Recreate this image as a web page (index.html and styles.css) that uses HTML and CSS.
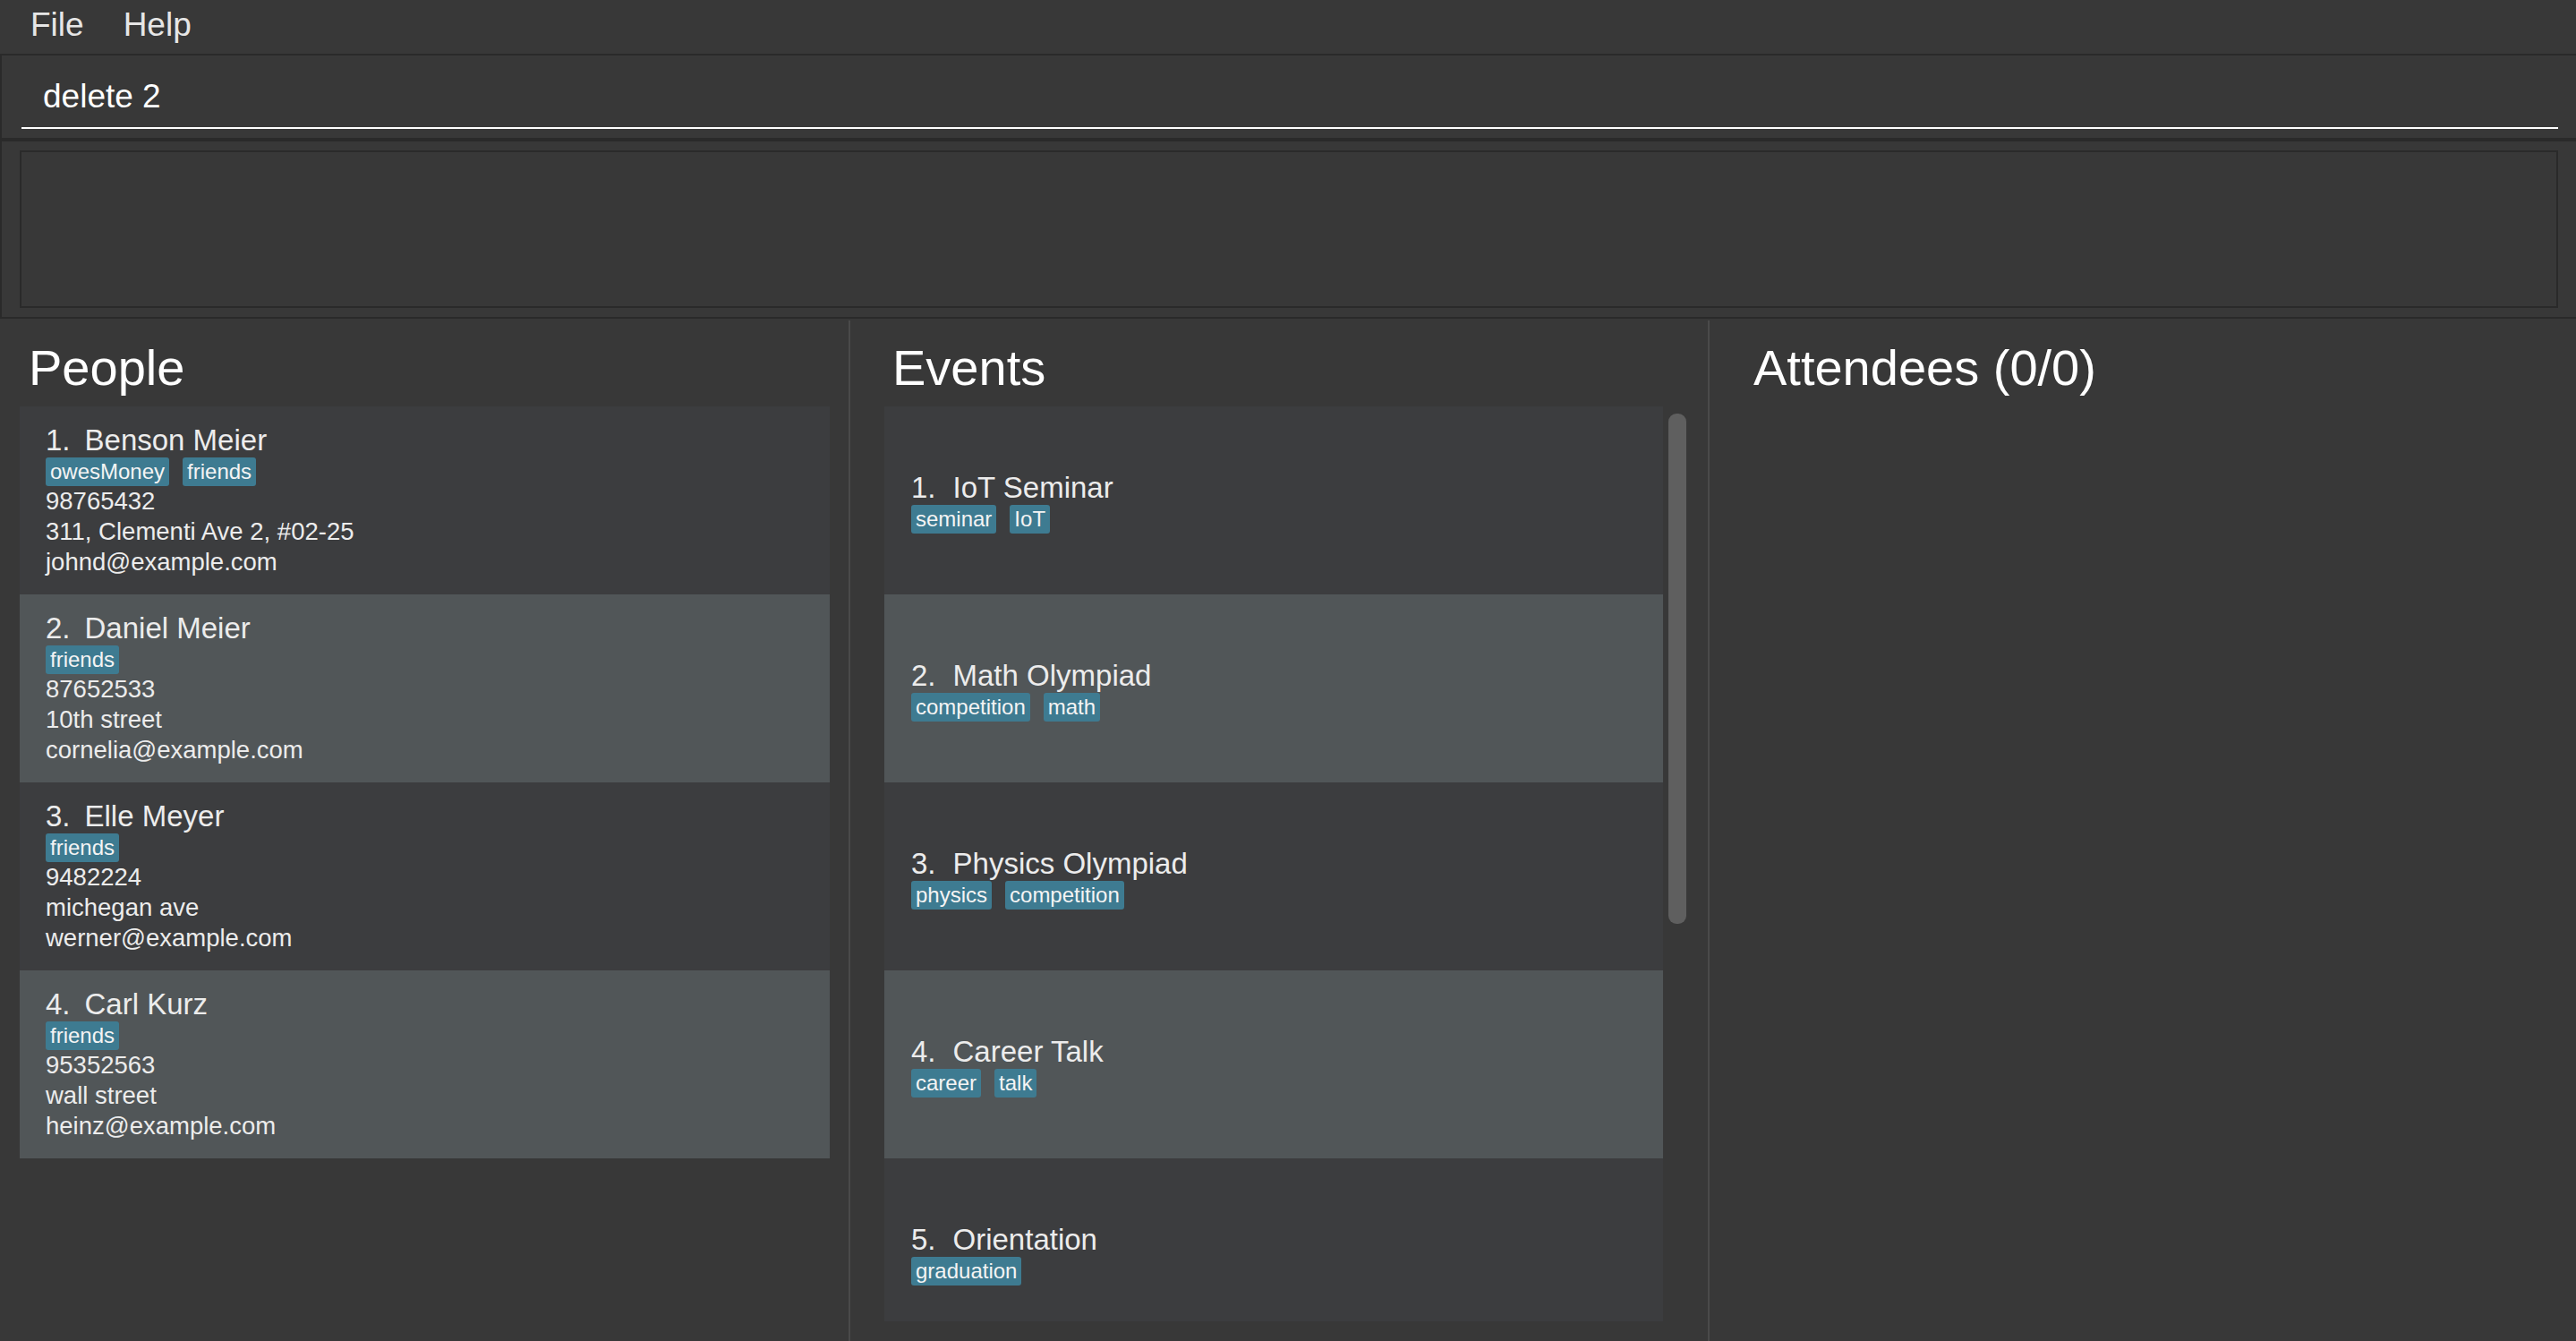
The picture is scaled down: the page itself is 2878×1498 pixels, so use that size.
FILE: index.html
```html
<!DOCTYPE html>
<html lang="en">
<head>
<meta charset="utf-8">
<title>Address Book</title>
<link rel="stylesheet" href="styles.css">
</head>
<body>
<div class="app">
  <div class="menubar">
    <span class="menu-item">File</span>
    <span class="menu-item">Help</span>
  </div>
  <div class="command">
    <div class="command-input">delete 2</div>
  </div>
  <div class="result">
    <div class="result-box"></div>
  </div>
  <div class="panels">
    <section class="panel people">
      <h1 class="panel-title">People</h1>
      <div class="list">
        <div class="card odd">
          <div class="name"><span class="idx">1.</span>Benson Meier</div>
          <div class="tags"><span class="tag">owesMoney</span><span class="tag">friends</span></div>
          <div class="line">98765432</div>
          <div class="line">311, Clementi Ave 2, #02-25</div>
          <div class="line">johnd@example.com</div>
        </div>
        <div class="card even">
          <div class="name"><span class="idx">2.</span>Daniel Meier</div>
          <div class="tags"><span class="tag">friends</span></div>
          <div class="line">87652533</div>
          <div class="line">10th street</div>
          <div class="line">cornelia@example.com</div>
        </div>
        <div class="card odd">
          <div class="name"><span class="idx">3.</span>Elle Meyer</div>
          <div class="tags"><span class="tag">friends</span></div>
          <div class="line">9482224</div>
          <div class="line">michegan ave</div>
          <div class="line">werner@example.com</div>
        </div>
        <div class="card even">
          <div class="name"><span class="idx">4.</span>Carl Kurz</div>
          <div class="tags"><span class="tag">friends</span></div>
          <div class="line">95352563</div>
          <div class="line">wall street</div>
          <div class="line">heinz@example.com</div>
        </div>
      </div>
    </section>
    <div class="divider"></div>
    <section class="panel events">
      <h1 class="panel-title">Events</h1>
      <div class="events-body">
        <div class="events-list">
          <div class="card event odd">
            <div class="name"><span class="idx">1.</span>IoT Seminar</div>
            <div class="tags"><span class="tag">seminar</span><span class="tag">IoT</span></div>
          </div>
          <div class="card event even">
            <div class="name"><span class="idx">2.</span>Math Olympiad</div>
            <div class="tags"><span class="tag">competition</span><span class="tag">math</span></div>
          </div>
          <div class="card event odd">
            <div class="name"><span class="idx">3.</span>Physics Olympiad</div>
            <div class="tags"><span class="tag">physics</span><span class="tag">competition</span></div>
          </div>
          <div class="card event even">
            <div class="name"><span class="idx">4.</span>Career Talk</div>
            <div class="tags"><span class="tag">career</span><span class="tag">talk</span></div>
          </div>
          <div class="card event odd">
            <div class="name"><span class="idx">5.</span>Orientation</div>
            <div class="tags"><span class="tag">graduation</span></div>
          </div>
        </div>
        <div class="scroll-track"><div class="scroll-thumb"></div></div>
      </div>
    </section>
    <div class="divider"></div>
    <section class="panel attendees">
      <h1 class="panel-title">Attendees (0/0)</h1>
    </section>
  </div>
</div>
</body>
</html>
```
FILE: styles.css
```css
* { box-sizing: border-box; }
html, body {
  margin: 0;
  padding: 0;
  background: #383838;
  font-family: "Liberation Sans", Arial, sans-serif;
  color: #eeeeee;
  overflow: hidden;
}
.app {
  width: 2878px;
  height: 1498px;
  display: flex;
  flex-direction: column;
}
.menubar {
  height: 62px;
  border-bottom: 2px solid #2a2a2a;
  display: flex;
  gap: 44px;
  padding-left: 34px;
  font-size: 37px;
  line-height: 56px;
  color: #e6e6e6;
}
.command {
  height: 92px;
  border-left: 2px solid #2a2a2a;
  padding: 14px 20px 10px 22px;
}
.command-input {
  height: 68px;
  line-height: 64px;
  font-size: 37px;
  color: #ffffff;
  padding-left: 24px;
  border-bottom: 2px solid #ffffff;
}
.result {
  height: 202px;
  border-top: 4px solid #2a2a2a;
  border-bottom: 2px solid #2a2a2a;
  border-left: 2px solid #2a2a2a;
  padding: 10px 20px 10px 20px;
}
.result-box {
  height: 176px;
  border: 2px solid #2a2a2a;
}
.panels {
  flex: 1;
  display: flex;
  min-height: 0;
}
.divider {
  width: 2px;
  margin-top: 2px;
  background: #4a4a4a;
}
.panel {
  padding-top: 23px;
  min-width: 0;
}
.panel-title {
  margin: 0 0 11px 0;
  font-size: 56px;
  line-height: 64px;
  font-weight: normal;
  color: #ffffff;
  white-space: nowrap;
}
.people {
  width: 948px;
  padding-left: 22px;
  padding-right: 21px;
}
.people .panel-title { padding-left: 10px; }
.events {
  width: 958px;
  padding-left: 38px;
  padding-right: 24px;
}
.events .panel-title { padding-left: 9px; }
.attendees {
  flex: 1;
  padding-left: 49px;
}
.card {
  height: 210px;
  padding: 19px 29px;
}
.card.odd { background: #3c3d3f; }
.card.even { background: #515658; }
.card.event { padding: 72px 30px 0 30px; }
.name {
  font-size: 33px;
  line-height: 38px;
  color: #ececec;
  white-space: nowrap;
}
.idx { margin-right: 16px; }
.event .idx { margin-right: 19px; }
.tags {
  display: flex;
  gap: 15px;
  height: 32px;
}
.tag {
  background: #3e7b91;
  color: #f4f4f4;
  font-size: 24px;
  line-height: 32px;
  padding: 0 5px;
  border-radius: 3px;
}
.line {
  font-size: 27.5px;
  line-height: 34px;
  color: #ececec;
  white-space: nowrap;
}
.events-body {
  display: flex;
  gap: 6px;
}
.events-list {
  width: 870px;
  height: 1022px;
  overflow: hidden;
}
.scroll-track {
  width: 20px;
  padding-top: 8px;
}
.scroll-thumb {
  width: 20px;
  height: 570px;
  border-radius: 9px;
  background: #5f5f5f;
}
```
